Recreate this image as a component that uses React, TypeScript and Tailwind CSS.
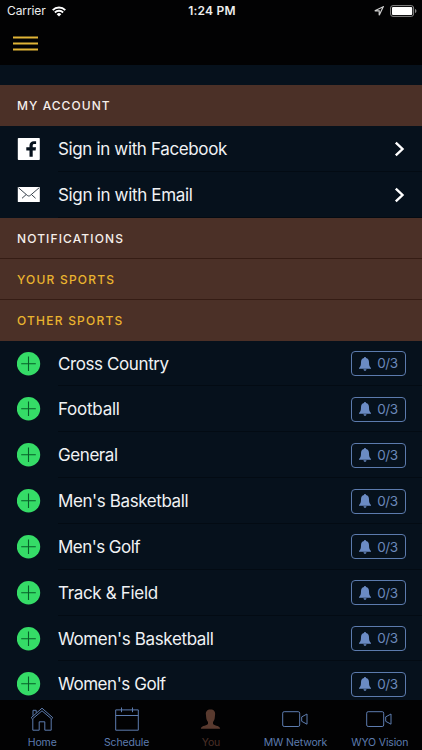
import type { ReactNode } from 'react'

const sports = [
  { name: 'Cross Country', spacing: 'tracking-[-0.4px]' },
  { name: 'Football', spacing: 'tracking-[-0.25px]' },
  { name: 'General', spacing: 'tracking-[-0.42px]' },
  { name: "Men's Basketball", spacing: 'tracking-[-0.4px]' },
  { name: "Men's Golf", spacing: 'tracking-[-0.55px]' },
  { name: 'Track & Field', spacing: 'tracking-[-0.33px]' },
  { name: "Women's Basketball", spacing: 'tracking-[-0.37px]' },
  { name: "Women's Golf", spacing: 'tracking-[-0.45px]' },
]

const StatusBar = () => (
  <div className="grid h-[22px] grid-cols-3 items-center pr-[5px] pl-[7px] text-[12px] text-[#eee]">
    <div className="flex items-center gap-[6px]">
      <span className="tracking-[-0.1px]">Carrier</span>
      <svg width="14" height="11" viewBox="0 0 14 11" fill="none" stroke="#fff" strokeWidth="1.9">
        <path d="M.7 4.1a9 9 0 0 1 12.6 0M2.9 6.5a5.8 5.8 0 0 1 8.2 0" />
        <path d="M4.7 8.2a3.2 3.2 0 0 1 4.6 0L7 10.6z" fill="#fff" stroke="none" />
      </svg>
    </div>
    <span className="text-center font-semibold tracking-[0.2px]">1:24 PM</span>
    <div className="flex items-center justify-end gap-[6px]">
      <svg width="10" height="10" viewBox="0 0 10 10" fill="none" stroke="#ccc" strokeWidth="1.2">
        <path d="M.8 4.8 9.2.8 5.2 9.2V4.8z" />
      </svg>
      <svg width="27" height="12" viewBox="0 0 27 12">
        <rect x=".6" y=".6" width="23" height="10.8" rx="2.4" fill="none" stroke="#888" />
        <rect x="2" y="2" width="20.2" height="8" rx="1" fill="#fff" />
        <path d="M25 4c1.9.5 1.9 3.5 0 4z" fill="#888" />
      </svg>
    </div>
  </div>
)

const SectionTitle = ({ text, className }: { text: string; className: string }) => (
  <h2
    className={`flex shrink-0 items-center bg-[#4b3027] pl-[17px] text-[12px] font-medium ${className}`}
  >
    {text}
  </h2>
)

const Row = ({
  icon,
  label,
  spacing,
  children,
}: {
  icon: ReactNode
  label: string
  spacing: string
  children: ReactNode
}) => (
  <li className="flex h-[45.83px] shrink-0 items-center pl-[17px]">
    <span className="flex w-[41px] shrink-0">{icon}</span>
    <div className="flex h-full flex-1 items-center justify-between border-b border-[#030b13] pt-px pr-[16px]">
      <span className={`pt-[1.5px] text-[17px] text-[#f0f2f4] ${spacing}`}>{label}</span>
      {children}
    </div>
  </li>
)

const Chevron = () => (
  <svg width="12" height="16" viewBox="0 0 12 16" fill="none" stroke="#fff" strokeWidth="2.4">
    <path d="m1.8 1.6 6.7 6.4-6.7 6.4" />
  </svg>
)

const Facebook = () => (
  <svg width="23" height="22" viewBox="0 0 23 22">
    <rect x=".8" width="22" height="22" rx=".8" fill="#fff" />
    <path
      d="M12.500 18.700v-6.300H9.300V9.300h3.200V7.700c0-2.900 1.700-4.500 4.400-4.500h2.200v2.900h-1.700c-1.300 0-1.700.6-1.700 1.800v1.400h3.300l-.4 3.100h-2.900v6.300z"
      fill="#06111c"
    />
  </svg>
)

const Envelope = () => (
  <svg width="23" height="15" viewBox="0 0 23 15">
    <rect x=".8" width="22" height="15" rx=".6" fill="#fff" />
    <path
      d="m1.5.8 8.8 7.600c.9.8 2.100.8 3 0L22.100.8M5 11.300l4-3.600m9.600 3.600-4-3.600"
      fill="none"
      stroke="#26313c"
      strokeWidth=".9"
    />
  </svg>
)

const AddIcon = () => (
  <svg width="24" height="24" viewBox="0 0 24 24">
    <circle cx="11.5" cy="11.8" r="11.7" fill="#35dc67" />
    <path d="M11.5 4.500v14.600M4.200 11.800h14.600" stroke="#075e29" strokeWidth="1.1" />
  </svg>
)

const AlertCount = () => (
  <span className="flex h-[25px] w-[55px] items-center justify-center gap-[6px] rounded-[4px] border border-[#5c7bad] text-[13.5px] tracking-[-0.35px] text-[#6b88bb]">
    <svg width="12" height="14" viewBox="0 0 12 14" fill="#6b8bc4">
      <path d="M6 0c-.7 0-1 .5-1 1C2.800 1.500 2 3.200 2 5.200 2 8.300 1.500 9.500 0 11v.7h12V11c-1.500-1.500-2-2.700-2-5.800C10 3.200 9.200 1.500 7 1c0-.5-.3-1-1-1zM4.500 12.300c.3 2 2.700 2 3 0z" />
    </svg>
    0/3
  </span>
)

const VideoIcon = () => (
  <svg width="27" height="24" viewBox="0 0 27 24" fill="none" stroke="currentColor">
    <rect x=".7" y="4.7" width="17" height="14.8" rx="1.5" />
    <path d="M19.700 9.900 25 7v10.200l-5.300-2.900z" />
  </svg>
)

const tabs = [
  {
    label: 'Home',
    color: 'text-[#5d7caf]',
    icon: (
      <svg width="24" height="24" viewBox="0 0 24 24" fill="none" stroke="currentColor">
        <path d="M1.200 10.700 12 1.200l10.800 9.500-1.300 1.200L12 3.800l-9.500 8.100z" />
        <path d="M3 8.700V3.300h3.200v2.400M2.800 12v11.200h6.400v-8.400h5.600v8.400h6.400V12" />
      </svg>
    ),
  },
  {
    label: 'Schedule',
    color: 'text-[#5d7caf]',
    icon: (
      <svg width="24" height="24" viewBox="0 0 24 24" fill="none" stroke="currentColor">
        <path d="M.7 2.900h22.600v20.300H.7zM.7 8.500h22.600M6.500.5v4.700M17.500.5v4.700" />
      </svg>
    ),
  },
  {
    label: 'You',
    color: 'text-[#4b3027]',
    icon: (
      <svg width="24" height="24" viewBox="0 0 24 24" fill="#593a2f">
        <path d="M11.500 2.400c-3.400 0-5 2-4.600 5.200l.3 3c.2 2 .8 3.300 1.800 4.500v1.400c0 2.500-6.700 1.500-7.200 5.300h19.400c-.5-3.800-7.200-2.800-7.200-5.300v-1.400c1-1.200 1.600-2.500 1.800-4.500l.3-3c.4-3.200-1.200-5.200-4.600-5.200z" />
      </svg>
    ),
  },
  { label: 'MW Network', color: 'text-[#5d7caf]', icon: <VideoIcon /> },
  { label: 'WYO Vision', color: 'text-[#5d7caf]', icon: <VideoIcon /> },
]

const TabBar = () => (
  <nav className="grid h-[50px] shrink-0 grid-cols-5 bg-[#020203]">
    {tabs.map(({ label, color, icon }) => (
      <div key={label} className={`flex flex-col items-center pt-[7px] ${color}`}>
        {icon}
        <span className="mt-[4px] text-[10.5px] leading-[15px] tracking-[-0.15px] whitespace-nowrap">
          {label}
        </span>
      </div>
    ))}
  </nav>
)

const App = () => {
  return (
    <div className="flex h-[750px] w-[422px] flex-col overflow-hidden bg-[#06111c] font-['Inter',sans-serif]">
      <header className="h-[65px] shrink-0 bg-[#020203]">
        <StatusBar />
        <button className="mt-[13px] ml-[13px] block">
          <svg width="25" height="17" viewBox="0 0 25 17" stroke="#e0b437" strokeWidth="2">
            <path d="M0 2.500h25M0 8.500h25M0 14.500h25" />
          </svg>
        </button>
      </header>

      <main className="flex min-h-0 flex-1 flex-col overflow-hidden pt-[20px]">
        <SectionTitle text="MY ACCOUNT" className="h-[41px] tracking-[1.05px] text-[#f5eeea]" />
        <ul className="flex shrink-0 flex-col">
          <Row icon={<Facebook />} label="Sign in with Facebook" spacing="tracking-[-0.36px]">
            <Chevron />
          </Row>
          <Row icon={<Envelope />} label="Sign in with Email" spacing="tracking-[-0.33px]">
            <Chevron />
          </Row>
        </ul>
        <SectionTitle
          text="NOTIFICATIONS"
          className="h-[41px] border-b border-[#351c14] pt-[2px] tracking-[1.12px] text-[#f5eeea]"
        />
        <SectionTitle
          text="YOUR SPORTS"
          className="h-[41px] border-b border-[#351c14] pt-[2px] tracking-[1.2px] text-[#eab42f]"
        />
        <SectionTitle
          text="OTHER SPORTS"
          className="h-[41px] pt-px tracking-[1.22px] text-[#eab42f]"
        />
        <ul className="flex shrink-0 flex-col">
          {sports.map(({ name, spacing }) => (
            <Row key={name} icon={<AddIcon />} label={name} spacing={spacing}>
              <AlertCount />
            </Row>
          ))}
        </ul>
      </main>

      <TabBar />
    </div>
  )
}

export default App
